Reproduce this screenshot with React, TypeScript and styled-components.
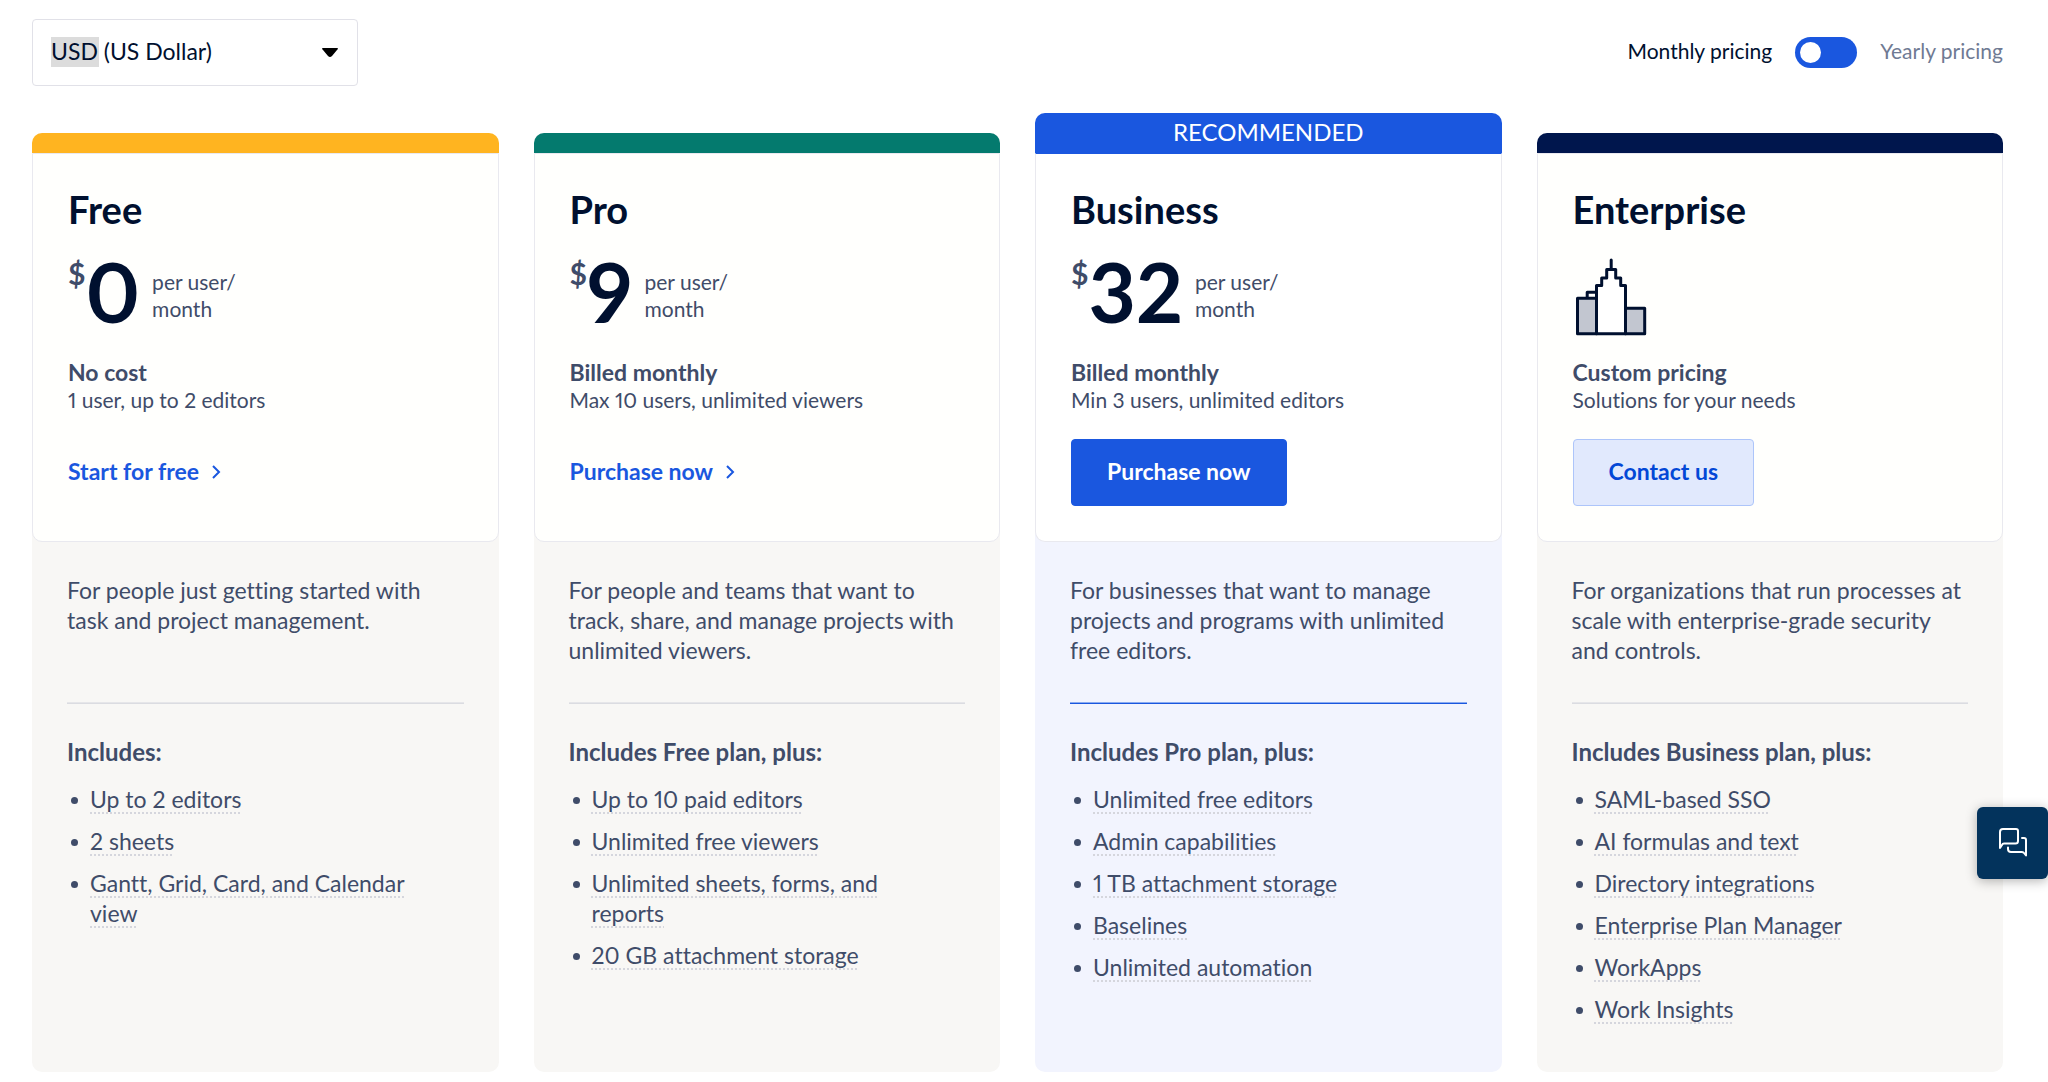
import React, { useState } from 'react';
import styled, { createGlobalStyle, css } from 'styled-components';

const color = {
  ink: '#00102f',
  slate: '#3f4c69',
  muted: '#6f7a93',
  blue: '#1a57df',
  line: '#e9e9ef',
};

const GlobalStyle = createGlobalStyle`
  *, *::before, *::after { box-sizing: border-box; }
  body {
    margin: 0;
    background: #fff;
    color: ${color.slate};
    font-family: Lato, "Liberation Sans", sans-serif;
    font-size: 23px;
    line-height: 30px;
    font-variant-ligatures: none;
    font-variant-numeric: proportional-nums;
  }
  h2, h3, p, ul { margin: 0; padding: 0; }
`;

const Page = styled.main`
  padding: 19px 45px 10px 32px;
`;

const Header = styled.header`
  display: flex;
  align-items: center;
  justify-content: space-between;
  margin-bottom: 27px;
`;

const CurrencyField = styled.div`
  position: relative;
  width: 326px;
`;

const CurrencySelect = styled.select`
  appearance: none;
  display: block;
  width: 100%;
  height: 67px;
  padding: 0 48px 3px 18px;
  border: 1px solid #e1e1e8;
  border-radius: 4px;
  background: linear-gradient(#dcdcdc, #dcdcdc) 18px 17px / 48px 30px no-repeat #fff;
  color: ${color.ink};
  font: inherit;
`;

const SelectArrow = styled.svg`
  position: absolute;
  top: 29px;
  right: 20px;
  width: 16px;
  height: 9px;
  pointer-events: none;
`;

const BillingSwitch = styled.div`
  display: flex;
  align-items: center;
  gap: 23px;
  font-size: 21px;
  line-height: 28px;
`;

const BillingLabel = styled.label<{ $active: boolean }>`
  padding-bottom: 3px;
  color: ${(p) => (p.$active ? color.ink : color.muted)};
`;

const Switch = styled.input`
  appearance: none;
  display: flex;
  align-items: center;
  width: 62px;
  height: 31px;
  margin: 0;
  padding: 0 5px;
  border-radius: 16px;
  background: ${color.blue};
  cursor: pointer;

  &::before {
    content: '';
    width: 21px;
    height: 21px;
    border-radius: 50%;
    background: #fff;
  }

  &:checked {
    justify-content: flex-end;
  }
`;

const Plans = styled.section`
  display: grid;
  grid-template-columns: repeat(4, minmax(0, 1fr));
  gap: 35px;
`;

const Card = styled.article<{ $featured: boolean }>`
  display: flex;
  flex-direction: column;
  margin-top: ${(p) => (p.$featured ? 0 : 20)}px;
  border-radius: 10px;
  overflow: hidden;
  background: ${(p) => (p.$featured ? '#f2f4fe' : '#f8f7f5')};
`;

const Banner = styled.div<{ $accent: string; $featured: boolean }>`
  height: ${(p) => (p.$featured ? 40 : 20)}px;
  background: ${(p) => p.$accent};
  color: #fff;
  font-size: 24px;
  line-height: 38px;
  text-align: center;
`;

const Summary = styled.div<{ $featured: boolean }>`
  display: flex;
  flex-direction: column;
  align-items: flex-start;
  padding: 32px 35px 35px;
  border: 1px solid ${color.line};
  border-top-color: ${(p) => (p.$featured ? color.blue : color.line)};
  border-radius: 0 0 10px 10px;
  background: ${(p) => (p.$featured ? '#fff' : '#fffffd')};
`;

const PlanName = styled.h2`
  color: ${color.ink};
  font-size: 38px;
  font-weight: 700;
  line-height: 46px;
`;

const PriceRow = styled.div`
  display: flex;
  align-items: center;
  height: 90px;
  margin: 14px 0 22px;
`;

const Currency = styled.span`
  align-self: flex-start;
  margin-top: 12px;
  font-size: 30px;
  font-weight: 700;
  line-height: 30px;
`;

const Amount = styled.strong`
  color: ${color.ink};
  font-size: 82px;
  font-weight: 700;
  line-height: 80px;
`;

const Unit = styled.span`
  margin: 8px 0 0 12px;
  font-size: 21px;
  line-height: 27px;
`;

const Billing = styled.h3`
  font-size: 23px;
  font-weight: 700;
  line-height: 28px;
`;

const Seats = styled.p`
  margin-bottom: 25px;
  font-size: 21px;
  line-height: 28px;
`;

const actionBase = css`
  display: flex;
  align-items: center;
  height: 67px;
  font-family: inherit;
  font-size: 23px;
  font-weight: 700;
  line-height: 30px;
`;

const ActionLink = styled.a`
  ${actionBase}
  gap: 11px;
  padding-bottom: 3px;
  color: ${color.blue};
  text-decoration: none;
`;

const ActionButton = styled.button<{ $primary: boolean }>`
  ${actionBase}
  padding: 0 35px 3px;
  border: 1px solid ${(p) => (p.$primary ? color.blue : '#adc5fa')};
  border-radius: 4px;
  background: ${(p) => (p.$primary ? color.blue : '#e1e9fd')};
  color: ${(p) => (p.$primary ? '#fff' : '#0347d6')};
  cursor: pointer;
`;

const Details = styled.div`
  padding: 33px 35px 48px;
`;

const Description = styled.p`
  min-height: 90px;
`;

const Divider = styled.hr<{ $featured: boolean }>`
  height: 2px;
  margin: 37px 0 33px;
  border: 0;
  border-top: 1px solid ${(p) => (p.$featured ? '#8babf0' : '#e6e6e9')};
  background: ${(p) => (p.$featured ? color.blue : '#dbdce1')};
`;

const IncludesTitle = styled.h3`
  margin-bottom: 17px;
  font-size: 24px;
  font-weight: 700;
  line-height: 30px;
`;

const Features = styled.ul`
  display: flex;
  flex-direction: column;
  gap: 12px;
  padding-right: 40px;
  list-style: none;
`;

const Feature = styled.li`
  display: flex;
  gap: 12px;
  padding-left: 4px;

  &::before {
    content: '';
    flex: none;
    width: 7px;
    height: 7px;
    margin-top: 13px;
    border-radius: 50%;
    background: ${color.slate};
  }
`;

const FeatureText = styled.span`
  text-decoration: underline dotted #d5d6dd 2px;
  text-underline-offset: 4px;
`;

const ChatButton = styled.button`
  position: fixed;
  top: 807px;
  right: 0;
  display: grid;
  place-items: center;
  width: 71px;
  height: 72px;
  padding: 0;
  border: 0;
  border-radius: 6px;
  background: #03335c;
  box-shadow: 0 2px 12px rgba(0, 0, 0, 0.3);
  cursor: pointer;
`;

const Chevron = () => (
  <svg width="12" height="16" viewBox="0 0 12 16" fill="none" aria-hidden="true">
    <path d="M3 3l6 6-6 6" stroke={color.blue} strokeWidth="2" />
  </svg>
);

const Buildings = () => (
  <svg width="78" height="90" viewBox="1 0 78 90" fill="none" aria-hidden="true">
    <g stroke={color.ink} strokeWidth="3" strokeLinejoin="round">
      <path d="M5.5 52.3h19v35.4h-19z" fill="#c2c6d0" />
      <path d="M53.5 62.3h19.2v25.4H53.5z" fill="#c2c6d0" />
      <path d="M15.2 52v-5.7h9" />
      <path
        d="M24.5 87.7V39.5h5.2V32h5v-8.4h9V32h5v7.5h4.8v48.2z"
        fill="#fff"
      />
      <path d="M39.2 23.5V14" strokeLinecap="round" />
    </g>
  </svg>
);

const ChatIcon = () => (
  <svg width="32" height="32" viewBox="0 0 32 32" fill="none" aria-hidden="true">
    <g stroke="#fff" strokeWidth="2" strokeLinejoin="round" strokeLinecap="round">
      <path d="M3 21V5q0-3 3-3h13q2 0 2 2v10q0 2.500-2.500 2.500H7q-1.500 0-2 1.500z" />
      <path d="M25 11h2q2 0 2 2v15.500l-2-2.500q-.5-1-2-1H14q-3 0-3-3v-1.500" />
    </g>
  </svg>
);

type Plan = {
  name: string;
  accent: string;
  featured?: boolean;
  price?: number;
  billing: string;
  seats: string;
  action: string;
  kind: 'link' | 'primary' | 'secondary';
  description: string;
  includes: string;
  features: string[];
};

const plans: Plan[] = [
  {
    name: 'Free',
    accent: '#ffb420',
    price: 0,
    billing: 'No cost',
    seats: '1 user, up to 2 editors',
    action: 'Start for free',
    kind: 'link',
    description: 'For people just getting started with task and project management.',
    includes: 'Includes:',
    features: ['Up to 2 editors', '2 sheets', 'Gantt, Grid, Card, and Calendar view'],
  },
  {
    name: 'Pro',
    accent: '#047a6e',
    price: 9,
    billing: 'Billed monthly',
    seats: 'Max 10 users, unlimited viewers',
    action: 'Purchase now',
    kind: 'link',
    description:
      'For people and teams that want to track, share, and manage projects with unlimited viewers.',
    includes: 'Includes Free plan, plus:',
    features: [
      'Up to 10 paid editors',
      'Unlimited free viewers',
      'Unlimited sheets, forms, and reports',
      '20 GB attachment storage',
    ],
  },
  {
    name: 'Business',
    accent: color.blue,
    featured: true,
    price: 32,
    billing: 'Billed monthly',
    seats: 'Min 3 users, unlimited editors',
    action: 'Purchase now',
    kind: 'primary',
    description:
      'For businesses that want to manage projects and programs with unlimited free editors.',
    includes: 'Includes Pro plan, plus:',
    features: [
      'Unlimited free editors',
      'Admin capabilities',
      '1 TB attachment storage',
      'Baselines',
      'Unlimited automation',
    ],
  },
  {
    name: 'Enterprise',
    accent: '#00164d',
    billing: 'Custom pricing',
    seats: 'Solutions for your needs',
    action: 'Contact us',
    kind: 'secondary',
    description:
      'For organizations that run processes at scale with enterprise-grade security and controls.',
    includes: 'Includes Business plan, plus:',
    features: [
      'SAML-based SSO',
      'AI formulas and text',
      'Directory integrations',
      'Enterprise Plan Manager',
      'WorkApps',
      'Work Insights',
    ],
  },
];

function PlanCard({ plan }: { plan: Plan }) {
  const featured = Boolean(plan.featured);
  return (
    <Card $featured={featured}>
      <Banner $accent={plan.accent} $featured={featured}>
        {featured && 'RECOMMENDED'}
      </Banner>
      <Summary $featured={featured}>
        <PlanName>{plan.name}</PlanName>
        <PriceRow>
          {plan.price === undefined ? (
            <Buildings />
          ) : (
            <>
              <Currency>$</Currency>
              <Amount>{plan.price}</Amount>
              <Unit>
                per user/
                <br />
                month
              </Unit>
            </>
          )}
        </PriceRow>
        <Billing>{plan.billing}</Billing>
        <Seats>{plan.seats}</Seats>
        {plan.kind === 'link' ? (
          <ActionLink href="#">
            {plan.action}
            <Chevron />
          </ActionLink>
        ) : (
          <ActionButton type="button" $primary={plan.kind === 'primary'}>
            {plan.action}
          </ActionButton>
        )}
      </Summary>
      <Details>
        <Description>{plan.description}</Description>
        <Divider $featured={featured} />
        <IncludesTitle>{plan.includes}</IncludesTitle>
        <Features>
          {plan.features.map((feature) => (
            <Feature key={feature}>
              <FeatureText>{feature}</FeatureText>
            </Feature>
          ))}
        </Features>
      </Details>
    </Card>
  );
}

export default function App() {
  const [yearly, setYearly] = useState(false);
  return (
    <>
      <GlobalStyle />
      <Page>
        <Header>
          <CurrencyField>
            <CurrencySelect aria-label="Currency" defaultValue="usd">
              <option value="usd">USD (US Dollar)</option>
            </CurrencySelect>
            <SelectArrow viewBox="0 0 16 9" aria-hidden="true">
              <path d="M1 0h14q2 0 0 2L10 8q-2 2-4 0L1 2q-2-2 0-2z" />
            </SelectArrow>
          </CurrencyField>
          <BillingSwitch>
            <BillingLabel htmlFor="billing" $active={!yearly}>
              Monthly pricing
            </BillingLabel>
            <Switch
              id="billing"
              type="checkbox"
              role="switch"
              checked={yearly}
              onChange={(e) => setYearly(e.target.checked)}
            />
            <BillingLabel htmlFor="billing" $active={yearly}>
              Yearly pricing
            </BillingLabel>
          </BillingSwitch>
        </Header>
        <Plans>
          {plans.map((plan) => (
            <PlanCard key={plan.name} plan={plan} />
          ))}
        </Plans>
      </Page>
      <ChatButton type="button" aria-label="Chat with us">
        <ChatIcon />
      </ChatButton>
    </>
  );
}
